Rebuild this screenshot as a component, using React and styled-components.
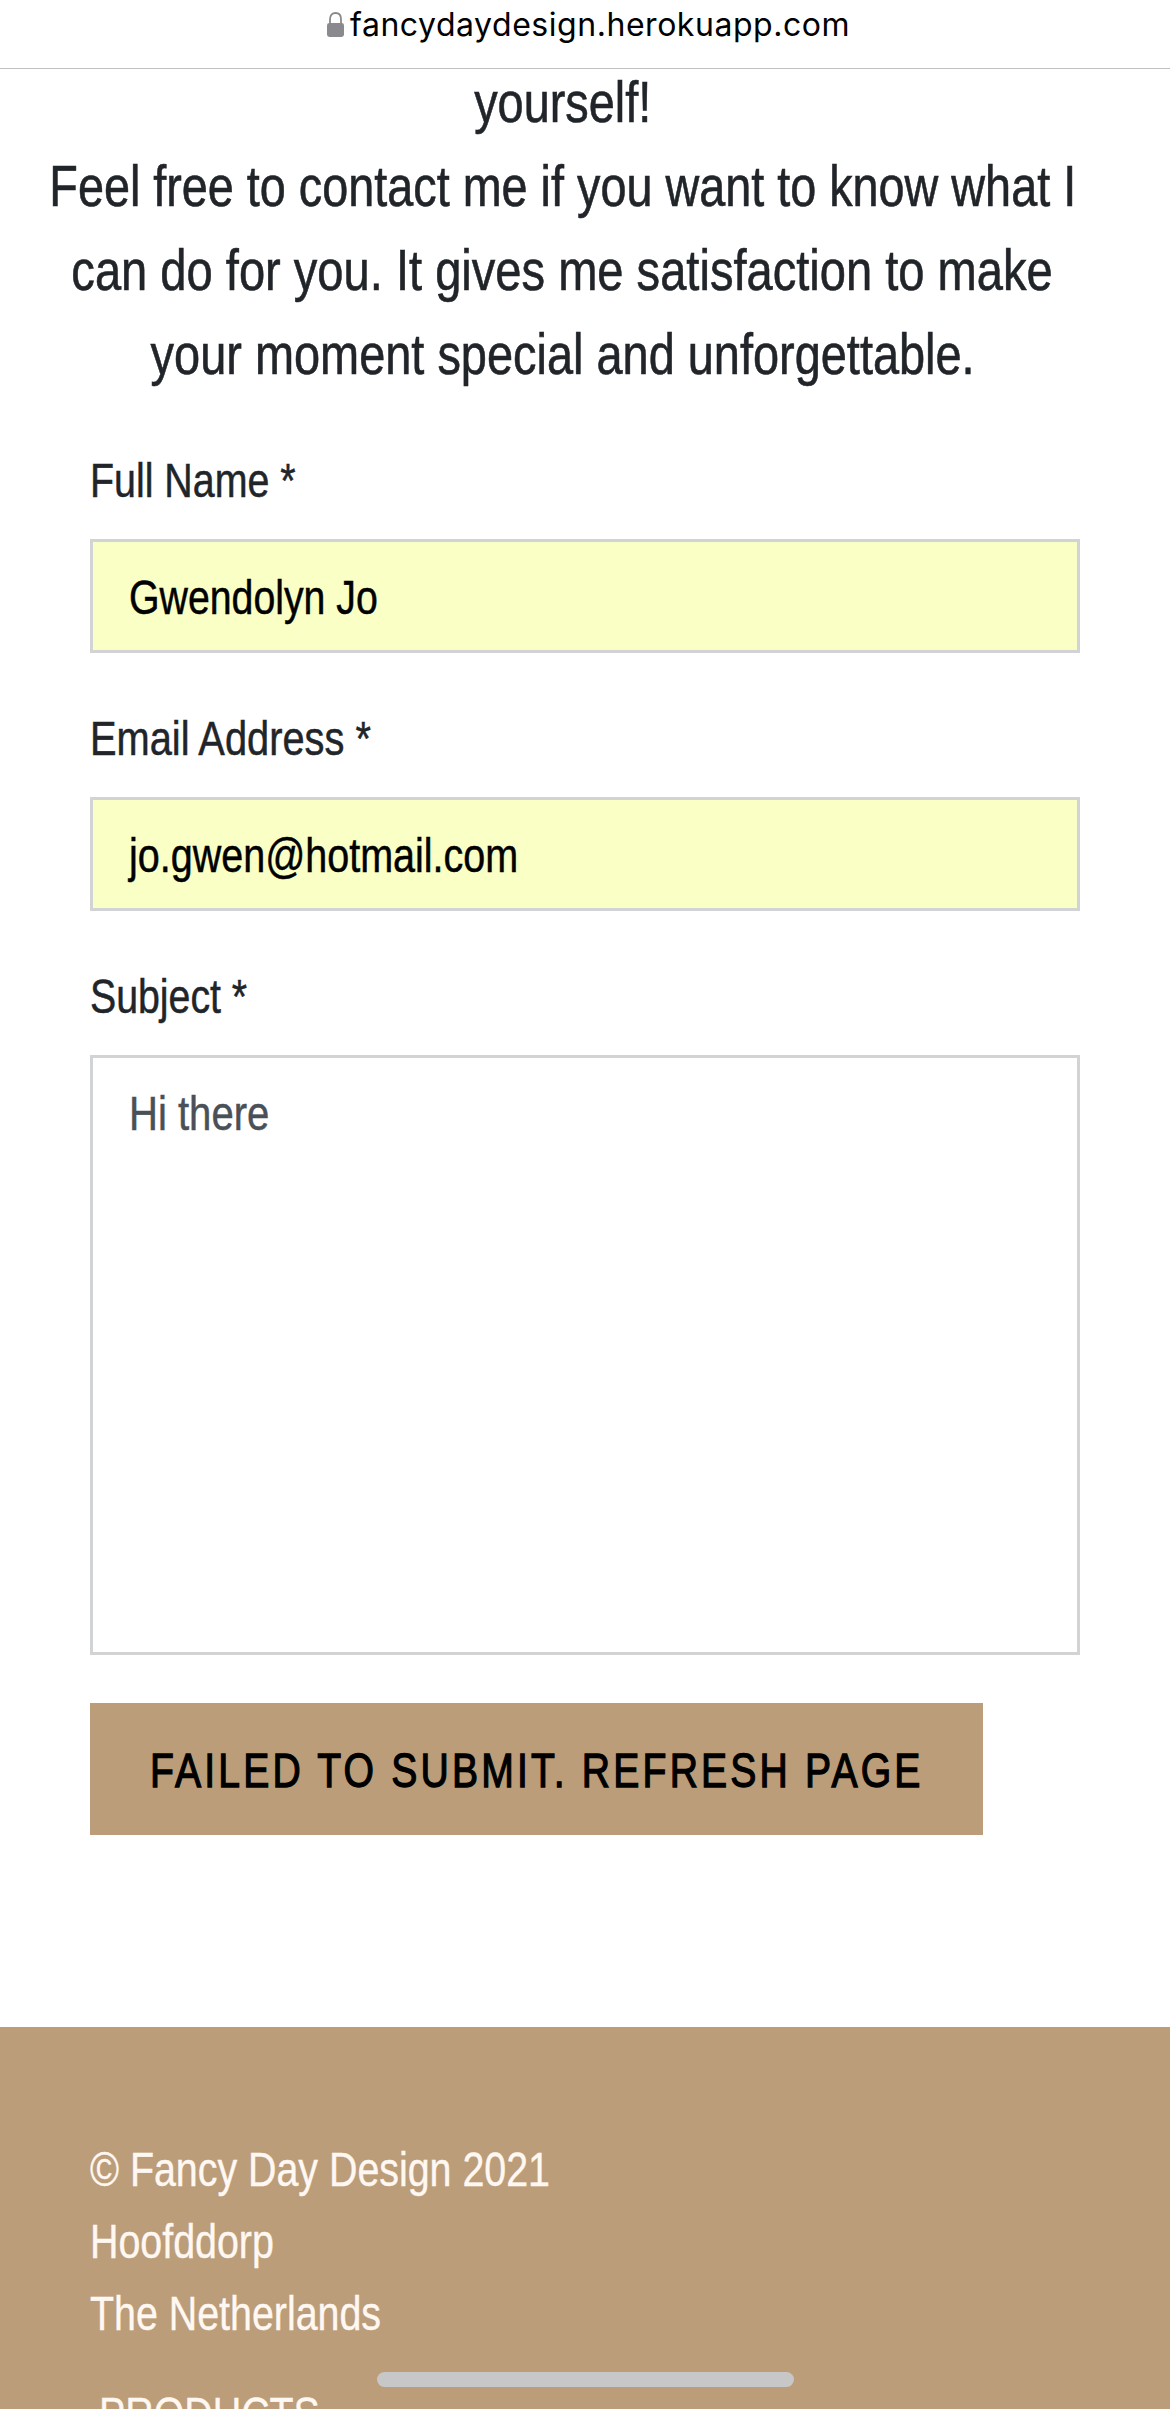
import React from "react";
import styled, { createGlobalStyle } from "styled-components";

const tan = "#bb9d7a";

const GlobalStyle = createGlobalStyle`
  *, *::before, *::after { box-sizing: border-box; }
  body {
    margin: 0;
    background: #fff;
    color: #212529;
    font-family: "Liberation Sans", Arial, sans-serif;
  }
`;

const Page = styled.div`
  position: relative;
  width: 1170px;
  height: 2409px;
  overflow: hidden;
  display: flex;
  flex-direction: column;
  background: #fff;
`;

const AddressBar = styled.header`
  flex: none;
  height: 69px;
  padding: 4px 0 0 327px;
  display: flex;
  align-items: flex-start;
  gap: 6px;
  border-bottom: 1px solid #c0c0c2;
`;

const LockIcon = styled.svg`
  flex: none;
  width: 17px;
  height: 25px;
  margin-top: 8px;
`;

const Host = styled.span`
  font-family: Inter, sans-serif;
  font-size: 32px;
  line-height: 41px;
  letter-spacing: 0.54px;
  color: #000;
  white-space: nowrap;
`;

const Narrow = styled.span`
  display: block;
  width: max-content;
  flex: none;
  white-space: nowrap;
  transform: scaleX(${(p) => p.$fit ?? 0.82});
  transform-origin: ${(p) => (p.$center ? "center" : "left")};
`;

const Intro = styled.div`
  flex: none;
  width: 1035px;
  margin: -9px 0 0 45px;
  display: flex;
  flex-direction: column;
  align-items: center;
  font-size: 57px;
  line-height: 84px;
  -webkit-text-stroke: 0.6px currentColor;
`;

const Form = styled.form`
  flex: none;
  margin: 49px 90px 0;
  display: flex;
  flex-direction: column;
  align-items: flex-start;
  font-size: 48px;
  line-height: 72px;
  -webkit-text-stroke: 0.5px currentColor;
`;

const Field = styled.div`
  width: 100%;
  margin-bottom: ${(p) => (p.$last ? 48 : 50)}px;
`;

const Label = styled.label`
  display: block;
  height: 72px;
  margin-bottom: 22px;
`;

const Control = styled.div`
  height: ${(p) => (p.$tall ? 600 : 114)}px;
  padding: 20px 36px 0;
  border: 3px solid #d1d3d5;
  background: ${(p) => (p.$filled ? "#faffc5" : "#fff")};
  color: ${(p) => (p.$filled ? "#000" : "#495057")};
`;

const Submit = styled.button`
  width: 893px;
  height: 132px;
  padding: 4px 0 0 60px;
  border: 0;
  background: ${tan};
  color: #000;
  font: inherit;
  line-height: 72px;
  letter-spacing: 3.9px;
  text-align: left;
  -webkit-text-stroke: 1.3px currentColor;
`;

const Footer = styled.footer`
  flex: none;
  height: 382px;
  margin-top: 192px;
  padding: 107px 90px 0;
  background: ${tan};
  color: #fff8f2;
  font-size: 48px;
  line-height: 72px;
  -webkit-text-stroke: 0.4px currentColor;
`;

const FooterHeading = styled.div`
  margin: 29px 0 0 9px;
`;

const HomeIndicator = styled.div`
  position: absolute;
  left: 377px;
  top: 2372px;
  width: 417px;
  height: 15px;
  border-radius: 8px;
  background: #c7c7c7;
`;

const introLines = [
  ["yourself!", 0.822],
  ["Feel free to contact me if you want to know what I", 0.8205],
  ["can do for you. It gives me satisfaction to make", 0.826],
  ["your moment special and unforgettable.", 0.823],
];

const fields = [
  { label: "Full Name *", fit: 0.82, value: "Gwendolyn Jo", valueFit: 0.818, filled: true },
  { label: "Email Address *", fit: 0.829, value: "jo.gwen@hotmail.com", valueFit: 0.823, filled: true },
  { label: "Subject *", fit: 0.818, value: "Hi there", valueFit: 0.835, tall: true },
];

export default function App() {
  return (
    <Page>
      <GlobalStyle />
      <AddressBar>
        <LockIcon viewBox="0 0 17 25" aria-hidden="true">
          <path d="M3 12V7.2C3 3.2 5.2 1 8.5 1S14 3.2 14 7.2V12" fill="none" stroke="#8a8a8e" strokeWidth="1.8" />
          <rect x="0" y="11" width="17" height="14" rx="2.4" fill="#8a8a8e" />
        </LockIcon>
        <Host>fancydaydesign.herokuapp.com</Host>
      </AddressBar>

      <Intro>
        {introLines.map(([text, fit]) => (
          <Narrow key={text} $fit={fit} $center>{text}</Narrow>
        ))}
      </Intro>

      <Form>
        {fields.map((f) => (
          <Field key={f.label} $last={f.tall}>
            <Label><Narrow $fit={f.fit}>{f.label}</Narrow></Label>
            <Control $tall={f.tall} $filled={f.filled}>
              <Narrow $fit={f.valueFit}>{f.value}</Narrow>
            </Control>
          </Field>
        ))}
        <Submit type="button">
          <Narrow $fit={0.815}>FAILED TO SUBMIT. REFRESH PAGE</Narrow>
        </Submit>
      </Form>

      <Footer>
        <Narrow>© Fancy Day Design 2021</Narrow>
        <Narrow>Hoofddorp</Narrow>
        <Narrow>The Netherlands</Narrow>
        <FooterHeading><Narrow>PRODUCTS</Narrow></FooterHeading>
      </Footer>
      <HomeIndicator />
    </Page>
  );
}
